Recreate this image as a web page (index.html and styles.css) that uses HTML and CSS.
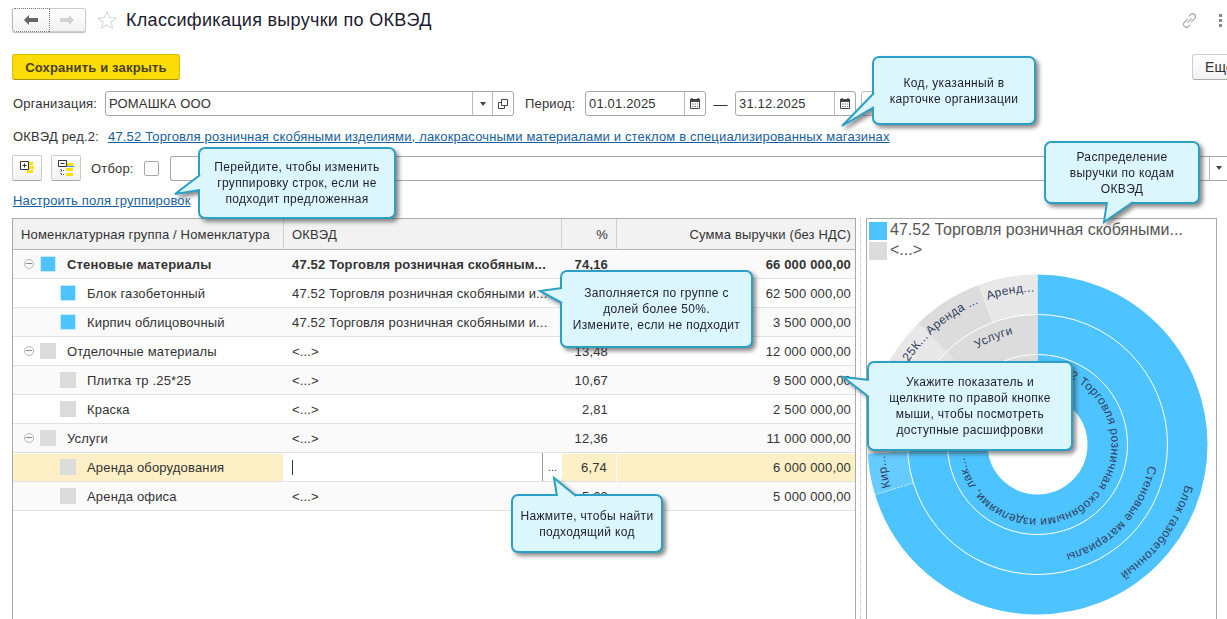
FILE: index.html
```html
<!DOCTYPE html>
<html lang="ru">
<head>
    <meta charset="UTF-8">
    <title>Классификация выручки по ОКВЭД</title>
    <link rel="stylesheet" href="styles.css">
</head>
<body>
    <div class="page">
        <div class="title-row">
            <div class="nav-group">
                <button class="nav-btn nav-back">
                    <svg width="14" height="10" viewBox="0 0 14 10"><path d="M0 5 L5 0 V3 H14 V7 H5 V10 Z" fill="#666"/></svg>
                </button>
                <button class="nav-btn">
                    <svg width="14" height="10" viewBox="0 0 14 10"><path d="M14 5 L9 0 V3 H0 V7 H9 V10 Z" fill="#d2d2d2"/></svg>
                </button>
            </div>
            <svg class="star" width="20" height="20" viewBox="0 0 20 20"><path d="M10 1.500 L12.500 7.400 L18.900 7.900 L14 12 L15.600 18.300 L10 15 L4.400 18.300 L6 12 L1.100 7.900 L7.500 7.400 Z" fill="none" stroke="#dcdcdc" stroke-width="1.200"/></svg>
            <h1>Классификация выручки по ОКВЭД</h1>
            <svg class="link-icon" width="17" height="17" viewBox="0 0 16 16"><path d="M6.500 6.500 L2.500 10.500 A2.800 2.800 0 0 0 6.500 14 L8.500 12 M9.500 9.500 L13.500 5.500 A2.800 2.800 0 0 0 9.500 2 L7.500 4 M6 10 L10 6" fill="none" stroke="#a8a8a8" stroke-width="1.100"/></svg>
            <div class="dots"><i></i><i></i><i></i></div>
        </div>

        <div class="cmd-row">
            <button class="save-btn">Сохранить и закрыть</button>
            <button class="more-btn">Еще</button>
        </div>

        <div class="form-row">
            <label class="org-label">Организация:</label>
            <div class="field org-field">
                <span class="field-text">РОМАШКА ООО</span>
                <span class="field-btn"><i class="caret"></i></span>
                <span class="field-btn field-btn-open">
                    <svg width="10" height="10" viewBox="0 0 10 10"><path d="M3.500 .5 H9.500 V6.500 H3.500 Z M3.500 3.500 H.5 V9.500 H6.500 V6.500" fill="none" stroke="#444"/></svg>
                </span>
            </div>
            <label class="period-label">Период:</label>
            <div class="field date-field">
                <span class="field-text">01.01.2025</span>
                <span class="field-btn"><svg class="cal" width="10" height="11" viewBox="0 0 10 11"><path d="M2 0 V2 M8 0 V2" stroke="#444" stroke-width="1.500"/><path d="M.5 1.500 H9.500 V10.500 H.5 Z" fill="#fff" stroke="#444"/><path d="M0 1 H10 V4 H0 Z" fill="#444"/><path d="M2 6 H8 M2 8.500 H8" stroke="#777" stroke-dasharray="1.500 1"/></svg></span>
            </div>
            <span class="dash">—</span>
            <div class="field date-field">
                <span class="field-text">31.12.2025</span>
                <span class="field-btn"><svg class="cal" width="10" height="11" viewBox="0 0 10 11"><path d="M2 0 V2 M8 0 V2" stroke="#444" stroke-width="1.500"/><path d="M.5 1.500 H9.500 V10.500 H.5 Z" fill="#fff" stroke="#444"/><path d="M0 1 H10 V4 H0 Z" fill="#444"/><path d="M2 6 H8 M2 8.500 H8" stroke="#777" stroke-dasharray="1.500 1"/></svg></span>
            </div>
            <div class="period-btn"></div>
        </div>

        <div class="okved-row">
            <label class="okved-label">ОКВЭД ред.2:</label>
            <a class="link" href="#">47.52 Торговля розничная скобяными изделиями, лакокрасочными материалами и стеклом в специализированных магазинах</a>
        </div>

        <div class="filter-row">
            <button class="tool-btn">
                <svg width="14" height="14" viewBox="0 0 14 14"><path d="M7 1 H13 V4 H7 Z M8 5 H14 V8 H8 Z M7 9 H13 V12 H7 Z" fill="#ffdf00"/><path d="M.5 .5 H8.500 V8.500 H.5 Z" fill="#fff" stroke="#333"/><path d="M2.500 4.500 H6.500 M4.500 2.500 V6.500" stroke="#333"/></svg>
            </button>
            <button class="tool-btn">
                <svg width="16" height="17" viewBox="0 0 16 17"><path d="M8 3 H15 V6 H8 Z M8 8 H15 V11 H8 Z M8 13 H15 V16 H8 Z" fill="#ffdf00"/><path d="M9 6.500 H16" stroke="#39c" /><path d="M.5 .5 H8.500 V6.500 H.5 Z" fill="#fff" stroke="#333"/><path d="M2.500 3.500 H6.500" stroke="#333"/><path d="M3 9 V15 M3 10.500 H7 M3 14.500 H7" stroke="#555" stroke-dasharray="1 1"/></svg>
            </button>
            <label class="filter-label">Отбор:</label>
            <span class="check"></span>
            <div class="filter-field"><span class="field-btn"><i class="caret"></i></span></div>
        </div>

        <div class="settings-row">
            <a class="link" href="#">Настроить поля группировок</a>
        </div>

        <div class="main">
            <div class="table-panel">
                <table class="rev-table">
                    <colgroup>
                        <col class="col-name"><col class="col-okved"><col class="col-pct"><col class="col-sum">
                    </colgroup>
                    <thead>
                        <tr>
                            <th>Номенклатурная группа / Номенклатура</th>
                            <th>ОКВЭД</th>
                            <th class="num pct">%</th>
                            <th class="num sum">Сумма выручки (без НДС)</th>
                        </tr>
                    </thead>
                    <tbody>
                        <tr class="bold">
                            <td><div class="name group"><i class="expander"></i><i class="swatch blue"></i>Стеновые материалы</div></td>
                            <td><div class="okved">47.52 Торговля розничная скобяным...</div></td>
                            <td class="num pct">74,16</td>
                            <td class="num sum">66 000 000,00</td>
                        </tr>
                        <tr>
                            <td><div class="name child"><i class="swatch blue"></i>Блок газобетонный</div></td>
                            <td><div class="okved">47.52 Торговля розничная скобяными и...</div></td>
                            <td class="num pct">70,22</td>
                            <td class="num sum">62 500 000,00</td>
                        </tr>
                        <tr>
                            <td><div class="name child"><i class="swatch blue"></i>Кирпич облицовочный</div></td>
                            <td><div class="okved">47.52 Торговля розничная скобяными и...</div></td>
                            <td class="num pct">3,93</td>
                            <td class="num sum">3 500 000,00</td>
                        </tr>
                        <tr>
                            <td><div class="name group"><i class="expander"></i><i class="swatch"></i>Отделочные материалы</div></td>
                            <td><div class="okved">&lt;...&gt;</div></td>
                            <td class="num pct">13,48</td>
                            <td class="num sum">12 000 000,00</td>
                        </tr>
                        <tr>
                            <td><div class="name child"><i class="swatch"></i>Плитка тр .25*25</div></td>
                            <td><div class="okved">&lt;...&gt;</div></td>
                            <td class="num pct">10,67</td>
                            <td class="num sum">9 500 000,00</td>
                        </tr>
                        <tr>
                            <td><div class="name child"><i class="swatch"></i>Краска</div></td>
                            <td><div class="okved">&lt;...&gt;</div></td>
                            <td class="num pct">2,81</td>
                            <td class="num sum">2 500 000,00</td>
                        </tr>
                        <tr>
                            <td><div class="name group"><i class="expander"></i><i class="swatch"></i>Услуги</div></td>
                            <td><div class="okved">&lt;...&gt;</div></td>
                            <td class="num pct">12,36</td>
                            <td class="num sum">11 000 000,00</td>
                        </tr>
                        <tr class="selected">
                            <td><div class="name child"><i class="swatch"></i>Аренда оборудования</div></td>
                            <td class="edit-cell"><div class="edit"><i class="cursor"></i><span class="pick">...</span></div></td>
                            <td class="num pct">6,74</td>
                            <td class="num sum">6 000 000,00</td>
                        </tr>
                        <tr>
                            <td><div class="name child"><i class="swatch"></i>Аренда офиса</div></td>
                            <td><div class="okved">&lt;...&gt;</div></td>
                            <td class="num pct">5,62</td>
                            <td class="num sum">5 000 000,00</td>
                        </tr>
                    </tbody>
                </table>
            </div>

            <div class="splitter"></div>

            <div class="chart-panel">
                <div class="legend-row"><i class="legend-swatch blue"></i><span class="legend-text">47.52 Торговля розничная скобяными...</span></div>
                <div class="legend-row"><i class="legend-swatch"></i><span class="legend-text">&lt;...&gt;</span></div>
                <svg class="sunburst" viewBox="-170.500 -183.500 349 370" width="349" height="370">
                    <defs>
                        <path id="ring1" d="M0 -74 A74 74 0 1 1 0 74 A74 74 0 1 1 0 -74"/>
                        <path id="ring2" d="M0 -113 A113 113 0 1 1 0 113 A113 113 0 1 1 0 -113"/>
                        <path id="ring3" d="M0 -153 A153 153 0 1 1 0 153 A153 153 0 1 1 0 -153"/>
                    </defs>
                    <!-- inner ring -->
                    <circle class="seg" r="70" stroke="#4dc4ff" stroke-width="40" pathLength="360" stroke-dasharray="267 360" transform="rotate(-90)"/>
                    <circle class="seg" r="70" stroke="#dcdcdc" stroke-width="40" pathLength="360" stroke-dasharray="93 360" transform="rotate(177)"/>
                    <!-- middle ring -->
                    <circle class="seg" r="110" stroke="#4dc4ff" stroke-width="40" pathLength="360" stroke-dasharray="267 360" transform="rotate(-90)"/>
                    <circle class="seg" r="110" stroke="#e4e4e4" stroke-width="40" pathLength="360" stroke-dasharray="48.500 360" transform="rotate(177)"/>
                    <circle class="seg" r="110" stroke="#dcdcdc" stroke-width="40" pathLength="360" stroke-dasharray="44.500 360" transform="rotate(225.500)"/>
                    <!-- outer ring -->
                    <circle class="seg" r="150" stroke="#4dc4ff" stroke-width="40" pathLength="360" stroke-dasharray="252.800 360" transform="rotate(-90)"/>
                    <circle class="seg" r="150" stroke="#66cbff" stroke-width="40" pathLength="360" stroke-dasharray="14.200 360" transform="rotate(162.800)"/>
                    <circle class="seg" r="150" stroke="#dcdcdc" stroke-width="40" pathLength="360" stroke-dasharray="10.100 360" transform="rotate(177)"/>
                    <circle class="seg" r="150" stroke="#e8e8e8" stroke-width="40" pathLength="360" stroke-dasharray="38.400 360" transform="rotate(187.100)"/>
                    <circle class="seg" r="150" stroke="#dcdcdc" stroke-width="40" pathLength="360" stroke-dasharray="24.300 360" transform="rotate(225.500)"/>
                    <circle class="seg" r="150" stroke="#e8e8e8" stroke-width="40" pathLength="360" stroke-dasharray="20.200 360" transform="rotate(249.800)"/>
                    <circle class="ring-line" r="90"/>
                    <circle class="ring-line" r="130"/>
                    <line class="seg-line" y1="-130" y2="-170" transform="rotate(252.800)"/>

                    <text class="chart-text"><textPath href="#ring1" startOffset="37%" text-anchor="middle">47.52 Торговля розничная скобяными изделиями, лак...</textPath></text>
                    <text class="chart-text"><textPath href="#ring1" startOffset="87%" text-anchor="middle">&lt;...&gt;</textPath></text>
                    <text class="chart-text"><textPath href="#ring2" startOffset="37%" text-anchor="middle">Стеновые материалы</textPath></text>
                    <text class="chart-text"><textPath href="#ring2" startOffset="81%" text-anchor="middle">Отделочн...</textPath></text>
                    <text class="chart-text"><textPath href="#ring2" startOffset="93.800%" text-anchor="middle">Услуги</textPath></text>
                    <text class="chart-text"><textPath href="#ring3" startOffset="35.100%" text-anchor="middle">Блок газобетонный</textPath></text>
                    <text class="chart-text"><textPath href="#ring3" startOffset="72.200%" text-anchor="middle">Кир...</textPath></text>
                    <text class="chart-text"><textPath href="#ring3" startOffset="82.300%" text-anchor="middle">Плитка тр .25К...</textPath></text>
                    <text class="chart-text"><textPath href="#ring3" startOffset="90.700%" text-anchor="middle">Аренда ...</textPath></text>
                    <text class="chart-text"><textPath href="#ring3" startOffset="97.200%" text-anchor="middle">Аренд...</textPath></text>
                </svg>
            </div>
        </div>

        <!-- hint callouts over the form -->
        <div class="callout callout-group">
            Перейдите, чтобы изменить<br>группировку строк, если не<br>подходит предложенная
            <svg class="tail"><path d="M0 26 L-25 45 L0 41"/></svg>
        </div>
        <div class="callout callout-code">
            Код, указанный в<br>карточке организации
            <svg class="tail"><path d="M0 35 L-32 68 L0 49"/></svg>
        </div>
        <div class="callout callout-chart">
            Распределение<br>выручки по кодам<br>ОКВЭД
            <svg class="tail"><path d="M61 59 L58 79 L87 59"/></svg>
        </div>
        <div class="callout callout-fill">
            Заполняется по группе с<br>долей более 50%.<br>Измените, если не подходит
            <svg class="tail"><path d="M0 16 L-22 19 L0 31"/></svg>
        </div>
        <div class="callout callout-find">
            Нажмите, чтобы найти<br>подходящий код
            <svg class="tail"><path d="M44 0 L41 -18 L63 0"/></svg>
        </div>
        <div class="callout callout-drill">
            Укажите показатель и<br>щелкните по правой кнопке<br>мыши, чтобы посмотреть<br>доступные расшифровки
            <svg class="tail"><path d="M0 17 L-26 14 L0 34"/></svg>
        </div>
    </div>
</body>
</html>
```

FILE: styles.css
```css
* {
    margin: 0;
    padding: 0;
    box-sizing: border-box;
}

body {
    background: white;
    color: #333;
    font-family: "Liberation Sans", Arial, sans-serif;
    font-size: 13px;
    letter-spacing: 0.17px;
}

.page {
    position: relative;
    width: 1227px;
    height: 619px;
    padding-top: 8px;
    overflow: hidden;
}

button {
    font-family: inherit;
    font-size: 13px;
    letter-spacing: 0.17px;
    color: #333;
}

.link {
    color: #16609f;
    text-decoration: underline;
}

/* title */
.title-row {
    display: flex;
    align-items: center;
    height: 24px;
    padding-left: 12px;
}

.nav-group {
    display: flex;
    width: 74px;
    height: 24px;
    border-radius: 3px;
    box-shadow: 0 1px 1px #bbb;
}

.nav-btn {
    flex: 1;
    display: flex;
    align-items: center;
    justify-content: center;
    background: linear-gradient(#fff, #f2f2f2);
    border: 1px solid #ccc;
    border-left: none;
    border-radius: 0 3px 3px 0;
}

.nav-back {
    border: 1px dotted #777;
    border-radius: 3px 0 0 3px;
}

.star {
    margin-left: 11px;
}

h1 {
    margin-left: 9px;
    font-size: 18px;
    font-weight: normal;
    letter-spacing: 0.3px;
    color: #1c1c30;
}

.link-icon {
    margin-left: auto;
}

.dots {
    display: flex;
    flex-direction: column;
    gap: 2px;
    margin-left: 21px;
    margin-right: 5px;
}

.dots i {
    width: 3px;
    height: 3px;
    background: #888;
}

/* commands */
.cmd-row {
    display: flex;
    justify-content: space-between;
    height: 26px;
    margin-top: 22px;
    padding-left: 12px;
}

.save-btn {
    width: 168px;
    background: #fbdc06;
    border: 1px solid #d8bd00;
    border-bottom-color: #a89400;
    border-radius: 3px;
    font-weight: bold;
    color: #4a4020;
}

.more-btn {
    width: 35px;
    padding-left: 12px;
    text-align: left;
    white-space: nowrap;
    overflow: hidden;
    background: linear-gradient(#fff, #f2f2f2);
    border: 1px solid #ccc;
    border-right: none;
    border-bottom-color: #aaa;
    border-radius: 3px 0 0 3px;
    font-size: 14px;
}

/* form rows */
.form-row {
    display: flex;
    align-items: center;
    height: 25px;
    margin-top: 11px;
    padding-left: 13px;
}

.org-label {
    width: 92px;
}

.field {
    display: flex;
    height: 25px;
    background: white;
    border: 1px solid #a8a8a8;
    border-radius: 3px;
}

.field-text {
    flex: 1;
    padding-left: 3px;
    line-height: 23px;
}

.field-btn {
    display: flex;
    align-items: center;
    justify-content: center;
    width: 20px;
    border-left: 1px solid #bbb;
}

.field-btn-open {
    width: 21px;
}

.caret {
    width: 0;
    height: 0;
    border: 3px solid transparent;
    border-top: 4px solid #444;
    border-bottom: none;
}

.org-field {
    width: 409px;
}

.period-label {
    margin-left: 11px;
    width: 60px;
}

.date-field {
    width: 121px;
}

.date-field .field-btn {
    width: 21px;
}

.dash {
    width: 29px;
    text-align: center;
    font-size: 14px;
}

.period-btn {
    width: 18px;
    height: 25px;
    margin-left: 5px;
    border: 1px solid #bbb;
    border-radius: 3px;
}

.okved-row {
    display: flex;
    align-items: center;
    height: 18px;
    margin-top: 11px;
    padding-left: 13px;
}

.okved-label {
    width: 95px;
}

.filter-row {
    display: flex;
    align-items: center;
    height: 26px;
    margin-top: 10px;
    padding-left: 12px;
}

.tool-btn {
    display: flex;
    align-items: center;
    justify-content: center;
    width: 30px;
    height: 26px;
    margin-right: 9px;
    background: linear-gradient(#fff, #f2f2f2);
    border: 1px solid #ccc;
    border-bottom-color: #aaa;
    border-radius: 2px;
}

.filter-label {
    margin-left: 1px;
    width: 53px;
}

.check {
    width: 15px;
    height: 15px;
    background: white;
    border: 1px solid #a8a8a8;
    border-radius: 2px;
}

.filter-field {
    display: flex;
    justify-content: flex-end;
    flex: 1;
    height: 25px;
    margin-left: 11px;
    border: 1px solid #a8a8a8;
    border-right: none;
    border-radius: 3px 0 0 3px;
}

.filter-field .field-btn {
    width: 18px;
}

.settings-row {
    height: 16px;
    margin-top: 12px;
    padding-left: 13px;
    line-height: 16px;
}

/* table and chart */
.main {
    display: flex;
    height: 401px;
    margin-top: 9px;
    padding-left: 12px;
}

.table-panel {
    width: 844px;
    border: 1px solid #aaa;
    border-bottom: none;
}

.rev-table {
    width: 842px;
    table-layout: fixed;
    border-collapse: separate;
    border-spacing: 0;
}

.col-name { width: 271px; }
.col-okved { width: 278px; }
.col-pct { width: 55px; }
.col-sum { width: 238px; }

.rev-table th {
    height: 31px;
    padding-left: 8px;
    background: #f2f2f2;
    border-bottom: 1px solid #b4b4b4;
    border-right: 1px solid #d0d0d0;
    font-weight: normal;
    text-align: left;
}

.rev-table th:last-child {
    border-right: none;
}

.rev-table td {
    height: 29px;
    border-bottom: 1px solid #e2e2e2;
    white-space: nowrap;
}

.rev-table tbody tr:nth-child(odd) td {
    background: #fafafa;
}

.rev-table .num {
    text-align: right;
}

.rev-table td.pct {
    padding-right: 9px;
}

.rev-table th.pct {
    padding-right: 8px;
}

.rev-table .sum {
    padding-right: 4px;
}

.bold td {
    font-weight: bold;
}

.name {
    display: flex;
    align-items: center;
}

.group {
    padding-left: 11px;
}

.child {
    padding-left: 47px;
}

.expander {
    position: relative;
    width: 10px;
    height: 10px;
    margin-right: 6px;
    border: 1px solid #b5b5b5;
    border-radius: 50%;
}

.expander::after {
    content: "";
    position: absolute;
    left: 1px;
    top: 3px;
    width: 6px;
    height: 1px;
    background: #888;
}

.swatch {
    width: 16px;
    height: 16px;
    margin-right: 11px;
    background: #dcdcdc;
    border: 1px solid #dcdcdc;
}

.swatch.blue {
    background: #4dc4ff;
    border-color: #c4ecff;
}

.okved {
    padding-left: 8px;
}

.rev-table .selected td {
    background: #fdf0c6;
    box-shadow: inset 0 1px 0 white;
    border-right: 1px solid white;
}

.rev-table .selected td:last-child {
    border-right: none;
}

.rev-table .selected .edit-cell {
    background: white;
    border-right: none;
}

.edit {
    display: flex;
    align-items: center;
    justify-content: space-between;
    height: 28px;
    padding-left: 8px;
}

.cursor {
    width: 1px;
    height: 15px;
    background: #333;
}

.pick {
    width: 20px;
    height: 28px;
    border-left: 1px solid #999;
    text-align: center;
    font-size: 11px;
    line-height: 28px;
}

.splitter {
    width: 10px;
    background: linear-gradient(#bbb 50%, transparent 50%) 4px 0 / 1px 2px repeat-y;
}

.chart-panel {
    width: 351px;
    border: 1px solid #aaa;
    border-bottom: none;
}

.legend-row {
    display: flex;
    align-items: center;
    height: 20px;
    padding-left: 2px;
}

.legend-row:first-child {
    margin-top: 2px;
}

.legend-swatch {
    flex: none;
    width: 18px;
    height: 18px;
    margin-right: 3px;
    background: #dcdcdc;
}

.legend-swatch.blue {
    background: #4dc4ff;
}

.legend-text {
    padding-bottom: 3px;
    font-size: 16px;
    letter-spacing: 0;
    color: #555;
    white-space: nowrap;
}

.sunburst {
    display: block;
}

.seg {
    fill: none;
}

.ring-line {
    fill: none;
    stroke: white;
    stroke-width: 1;
}

.seg-line {
    stroke: white;
    stroke-dasharray: 1 2;
}

.chart-text {
    font-size: 12px;
    letter-spacing: 0.35px;
    fill: #33405f;
}

/* callouts */
.callout {
    position: absolute;
    display: flex;
    align-items: center;
    justify-content: center;
    background: #dcf6fe;
    border: 2px solid #2ba0c4;
    border-radius: 7px;
    color: #1c1c30;
    font-size: 12px;
    letter-spacing: 0.33px;
    line-height: 16px;
    text-align: center;
    filter: drop-shadow(3px 3px 2px rgba(60, 60, 60, 0.6));
}

.tail {
    position: absolute;
    left: 0;
    top: 0;
    width: 100%;
    height: 100%;
    overflow: visible;
}

.tail path {
    fill: #dcf6fe;
    stroke: #2ba0c4;
    stroke-width: 2;
}

.callout-group { left: 198px; top: 147px; width: 198px; height: 72px; }
.callout-code { left: 872px; top: 56px; width: 164px; height: 69px; }
.callout-chart { left: 1044px; top: 141px; width: 156px; height: 63px; }
.callout-fill { left: 560px; top: 270px; width: 193px; height: 78px; }
.callout-find { left: 511px; top: 494px; width: 152px; height: 59px; }
.callout-drill { left: 867px; top: 361px; width: 206px; height: 90px; }
```
